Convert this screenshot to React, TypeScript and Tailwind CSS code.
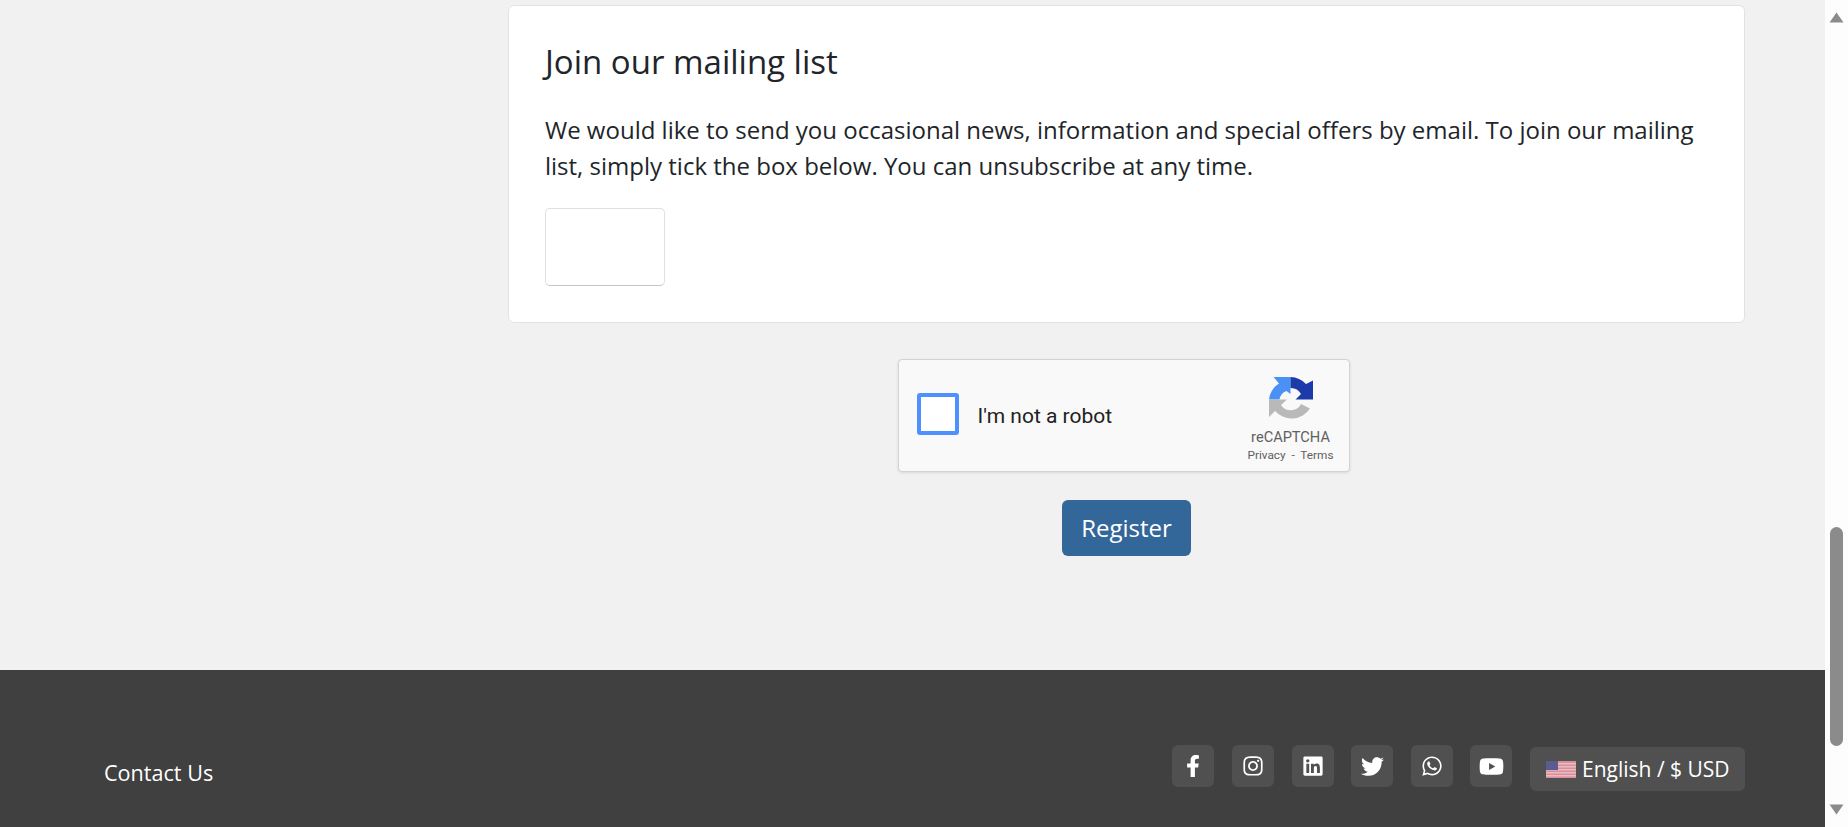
import { FaFacebookF, FaInstagram, FaLinkedin, FaTwitter, FaWhatsapp, FaYoutube } from "react-icons/fa";

const socials = [
  { Icon: FaFacebookF, size: 22 },
  { Icon: FaInstagram, size: 22 },
  { Icon: FaLinkedin, size: 22 },
  { Icon: FaTwitter, size: 23 },
  { Icon: FaWhatsapp, size: 22 },
  { Icon: FaYoutube, size: 25 },
];

function RecaptchaLogo() {
  return (
    <svg viewBox="7 6 48 44" className="w-[48px] h-[44px]">
      <path d="M30.5 7 H13.5 L19 13.5 A22 22 0 0 0 9 29.5 H19.5 A11 11 0 0 1 26.5 21 L30.5 24 Z" fill="#4a90f5" />
      <path d="M30.5 7 A22 22 0 0 1 46 14 L53 10.5 V29.5 H35.5 L41 24 A11.5 11.5 0 0 0 30.5 18 Z" fill="#1c3aa9" />
      <path d="M9 29.5 V47 L15 41 A22 22 0 0 0 50 38.5 L41 34 A11.5 11.5 0 0 1 21 35 L27 29.5 Z" fill="#b9b9b9" />
    </svg>
  );
}

function Flag() {
  return (
    <svg viewBox="0 0 30 17" className="w-[30px] h-[17px] shrink-0">
      <rect width="30" height="17" fill="#d98e9a" />
      <rect y="2" width="30" height="1.5" fill="#e8bcc2" />
      <rect y="5" width="30" height="1.5" fill="#e8bcc2" />
      <rect y="8" width="30" height="1.5" fill="#e8bcc2" />
      <rect y="11" width="30" height="1.5" fill="#e8bcc2" />
      <rect y="14" width="30" height="1.5" fill="#e8bcc2" />
      <rect width="12" height="9" fill="#5b5b8f" />
    </svg>
  );
}

function Scrollbar() {
  return (
    <div className="w-[23px] h-[827px] shrink-0 bg-[#fdfdfd] flex flex-col items-center pt-[12px]">
      <svg viewBox="0 0 15 11" className="w-[15px] h-[11px]">
        <path d="M7.5 0.5 L14.5 10.5 H0.5 Z" fill="#8b8b8b" />
      </svg>
      <div className="w-[13px] h-[219px] mt-[504px] rounded-full bg-[#8b8b8b]" />
      <svg viewBox="0 0 15 11" className="w-[15px] h-[11px] mt-[58px]">
        <path d="M0.5 0.5 H14.5 L7.5 10.5 Z" fill="#8b8b8b" />
      </svg>
    </div>
  );
}

export default function App() {
  return (
    <div className="flex h-[827px] overflow-hidden bg-[#f1f1f1] font-['Open_Sans',sans-serif] text-[#212529]">
      <div className="flex-1 min-w-0 flex flex-col">
        <main className="pl-[508px] pr-[80px] pt-[5px] pb-[114px] flex flex-col items-center">
          <section className="w-full bg-white border border-[#e2e2e2] rounded-[6px] px-[36px] pt-[36px] pb-[36px]">
            <h2 className="text-[33px] leading-[40px] font-normal">Join our mailing list</h2>
            <p className="mt-[30px] text-[24px] leading-[36px]">
              We would like to send you occasional news, information and special offers by email. To join our mailing list, simply tick the box below. You can unsubscribe at any time.
            </p>
            <div className="mt-[24px] w-[120px] h-[78px] bg-white border border-[#e0e0e0] border-b-[#c4c4c4] rounded-[5px]" />
          </section>

          <div className="mt-[36px] mr-[6px] w-[452px] h-[113px] bg-[#f9f9f9] border border-[#d3d3d3] rounded-[4px] shadow-[0_1px_3px_rgba(0,0,0,0.1)] flex items-center font-['Roboto',sans-serif]">
            <div className="ml-[18px] mb-[4px] w-[42px] h-[42px] bg-white border-[4px] border-[#4d90fe] rounded-[3px] shrink-0" />
            <span className="ml-[19px] pt-[2px] text-[21px] text-[#222222]">I'm not a robot</span>
            <div className="ml-auto mr-[16px] w-[84px] self-start pt-[16px] flex flex-col items-center">
              <RecaptchaLogo />
              <span className="mt-[8px] text-[14.6px] leading-[18px] text-[#606060]">reCAPTCHA</span>
              <span className="mt-[2px] text-[11.8px] leading-[14px] text-[#606060] whitespace-pre">Privacy  -  Terms</span>
            </div>
          </div>

          <button className="mt-[28px] w-[129px] h-[56px] bg-[#336699] text-white text-[24px] rounded-[6px]">Register</button>
        </main>

        <footer className="flex-1 bg-[#404040] text-white pl-[104px] pr-[80px] pt-[75px] flex items-start justify-between">
          <a className="mt-[14px] text-[21.6px] leading-[28px]">Contact Us</a>
          <div className="flex items-start gap-[17.6px]">
            {socials.map(({ Icon, size }, i) => (
              <span key={i} className="w-[42px] h-[42px] bg-[#505050] rounded-[6px] flex items-center justify-center">
                <Icon size={size} color="#ffffff" />
              </span>
            ))}
            <button className="mt-[2px] h-[44px] w-[215px] bg-[#505050] rounded-[6px] flex items-center pl-[16px] gap-[6px] text-[21px] text-white whitespace-nowrap">
              <Flag />
              <span className="pt-[1px]">English / $ USD</span>
            </button>
          </div>
        </footer>
      </div>
      <Scrollbar />
    </div>
  );
}
